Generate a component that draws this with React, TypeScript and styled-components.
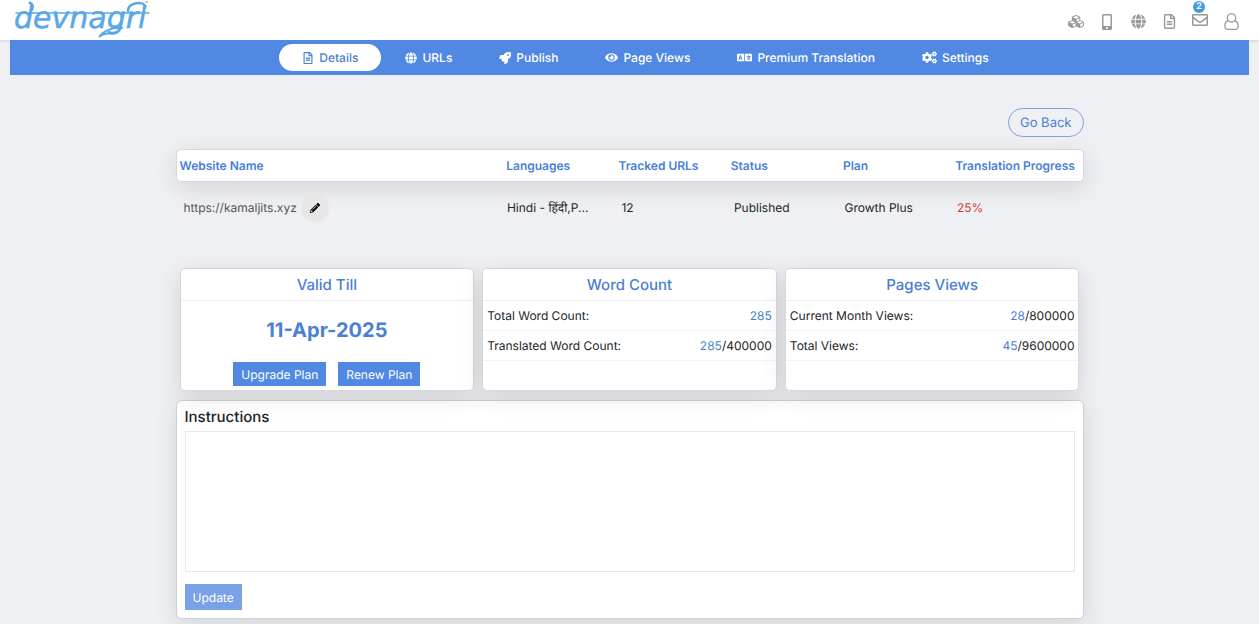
import React from "react";
import styled, { createGlobalStyle } from "styled-components";
import {
  FaCogs,
  FaEye,
  FaGlobe,
  FaLanguage,
  FaMobileAlt,
  FaPencilAlt,
  FaRegEnvelope,
  FaRegFileAlt,
  FaRocket,
} from "react-icons/fa";

const blue = "#5088e3";
const textBlue = "#4a7fd4";
const shadow = "0 6px 24px rgba(0, 0, 0, 0.12)";

const GlobalStyle = createGlobalStyle`
  * { box-sizing: border-box; }
  body {
    margin: 0;
    background: #eff0f4;
    color: #212529;
    font-family: Inter, "Noto Sans", sans-serif;
    font-size: 12px;
    line-height: 18px;
    text-rendering: geometricPrecision;
  }
  button, textarea { font-family: inherit; text-rendering: inherit; }
  h2, p { margin: 0; padding: 0; }
`;

const Header = styled.header`
  display: flex;
  justify-content: space-between;
  height: 40px;
  padding: 0 20px 0 12px;
  background: #fff;
  box-shadow: 0 1px 3px rgba(0, 0, 0, 0.12);
`;

const LogoLink = styled.a`
  display: block;
  height: 40px;
`;

const Tools = styled.div`
  display: flex;
  align-items: center;
  gap: 15px;
  padding-top: 3px;
`;

const ToolButton = styled.button`
  position: relative;
  display: flex;
  align-items: center;
  justify-content: center;
  width: 16px;
  height: 20px;
  padding: 0;
  border: 0;
  background: none;
  color: #999;
  font-size: 16px;
  svg { flex: none; }
`;

const MailButton = styled(ToolButton)`
  align-items: flex-start;
`;

const Badge = styled.span`
  position: absolute;
  top: -11px;
  left: 1px;
  width: 12px;
  height: 12px;
  border-radius: 6px;
  background: #459bdc;
  color: #fff;
  font-size: 9px;
  font-weight: 600;
  line-height: 12px;
  text-align: center;
`;

const Nav = styled.nav`
  display: flex;
  justify-content: center;
  align-items: center;
  gap: 1px;
  height: 35px;
  margin: 0 10px;
  padding-left: 32px;
  background: ${blue};
`;

const NavLink = styled.a<{ $active?: boolean }>`
  display: flex;
  align-items: center;
  gap: 5px;
  height: 27px;
  padding: 0 23px;
  border-radius: 14px;
  background: ${(p) => (p.$active ? "#fff" : "transparent")};
  color: ${(p) => (p.$active ? textBlue : "#fff")};
  font-weight: 500;
  text-decoration: none;
  white-space: nowrap;
`;

const Main = styled.main`
  max-width: 908px;
  margin: 0 auto;
  padding: 33px 0 6px;
`;

const TopBar = styled.div`
  display: flex;
  justify-content: flex-end;
  margin-bottom: 12px;
`;

const BackButton = styled.button`
  height: 29px;
  padding: 0 11px;
  border: 1px solid #7ba2dd;
  border-radius: 15px;
  background: transparent;
  color: ${textBlue};
  font-size: 13px;
`;

const SiteTable = styled.table`
  display: block;
  width: 100%;
  thead, tbody { display: block; }
`;

const columns = "326fr 112fr 112fr 112fr 112fr 130fr";

const HeadRow = styled.tr`
  display: grid;
  grid-template-columns: ${columns};
  align-items: center;
  height: 33px;
  border: 1px solid #d6d7da;
  border-radius: 5px;
  background: #fff;
  box-shadow: ${shadow};
`;

const HeadCell = styled.th`
  padding: 0 0 0 3px;
  color: ${textBlue};
  font-weight: 600;
  text-align: left;
  white-space: nowrap;
`;

const BodyRow = styled.tr`
  display: grid;
  grid-template-columns: ${columns};
  align-items: center;
  height: 44px;
  padding-top: 8px;
  border-bottom: 1px solid #ebecef;
`;

const Cell = styled.td<{ $color?: string; $indent: number }>`
  display: flex;
  align-items: center;
  gap: 4px;
  padding: 0 0 0 ${(p) => p.$indent}px;
  color: ${(p) => p.$color || "inherit"};
  white-space: nowrap;
`;

const EditButton = styled.button`
  display: flex;
  align-items: center;
  justify-content: center;
  width: 28px;
  height: 28px;
  padding: 0;
  border: 0;
  border-radius: 50%;
  background: #e7e7e8;
  color: #000;
  font-size: 10px;
`;

const Cards = styled.div`
  position: relative;
  display: grid;
  grid-template-columns: repeat(3, 1fr);
  gap: 8px;
  margin: 42px 4px 9px;
  z-index: 1;
`;

const Card = styled.section`
  min-height: 123px;
  border: 1px solid #d6d7da;
  border-radius: 5px;
  background: #fff;
  box-shadow: ${shadow};
`;

const CardTitle = styled.h2`
  height: 32px;
  border-bottom: 1px solid #f0f0f2;
  color: ${textBlue};
  font-size: 15px;
  font-weight: 500;
  line-height: 31px;
  text-align: center;
`;

const ValidDate = styled.p`
  padding: 14px 0 17px;
  color: ${textBlue};
  font-size: 20px;
  font-weight: 700;
  line-height: 30px;
  text-align: center;
`;

const Actions = styled.div`
  display: flex;
  justify-content: center;
  align-items: flex-start;
  gap: 12px;
`;

const SolidButton = styled.button`
  height: 24px;
  padding: 0 8px;
  border: 0;
  background: ${blue};
  color: #fff;
  font-size: 12px;
  &:disabled { height: 26px; background: #78a1e8; }
`;

const Stat = styled.div`
  display: flex;
  justify-content: space-between;
  height: 30px;
  padding: 0 4px;
  border-bottom: 1px solid #f3f3f5;
  line-height: 29px;
`;

const Figure = styled.span`
  color: ${textBlue};
`;

const Panel = styled.form`
  padding: 6px 8px 8px;
  border: 1px solid #d0d1d4;
  border-radius: 5px;
  background: #fff;
  box-shadow: ${shadow};
`;

const PanelLabel = styled.label`
  display: block;
  margin-bottom: 4px;
  font-size: 15px;
  font-weight: 500;
  line-height: 20px;
`;

const Notes = styled.textarea`
  display: block;
  width: 100%;
  height: 141px;
  margin-bottom: 12px;
  border: 1px solid #e8e8ea;
  background: #fff;
  resize: none;
`;

const Logo = () => (
  <svg width="140" height="40" viewBox="0 0 140 40" fill="none" stroke="#5ba8e8" strokeLinecap="round" aria-hidden="true">
    <text x="2" y="28" fill="#5ba8e8" stroke="#5ba8e8" strokeWidth="0.5" fontFamily="DejaVu Sans" fontStyle="italic" fontSize="30">
      devnagri
    </text>
    <path d="M4 13H137" strokeWidth="1.5" />
    <path d="M18 3C20 4 21 6 20 9" strokeWidth="3" />
    <path d="M116 11C116 2 132 1 133 6L131 14" strokeWidth="2.5" />
    <path d="M110 28C101 27 91 31 87 37C92 32 99 34 104 33" strokeWidth="2" />
    <text x="133" y="5" fill="#444" stroke="none" fontFamily="Inter" fontSize="5">
      ™
    </text>
  </svg>
);

const CubesIcon = () => (
  <svg width="17" height="13" viewBox="0 0 2304 1792" fill="currentColor" aria-hidden="true">
    <path d="M640 1632l384-192v-314l-384 164v342zm-64-454l404-173-404-173-404 173zm1088 454l384-192v-314l-384 164v342zm-64-454l404-173-404-173-404 173zm-448-293l384-165v-266l-384 164v267zm-64-379l441-189-441-189-441 189zm1088 518v416q0 36-19 67t-52 47l-448 224q-25 14-57 14t-57-14l-448-224q-4-2-7-4-2 2-7 4l-448 224q-25 14-57 14t-57-14l-448-224q-33-16-52-47t-19-67v-416q0-38 21.5-70t56.5-48l434-186v-400q0-38 21.5-70t56.5-48l448-192q23-10 50-10t50 10l448 192q35 16 56.5 48t21.5 70v400l434 186q36 16 57 48t21 70z" />
  </svg>
);

const UserIcon = () => (
  <svg width="15" height="17" viewBox="0 0 1536 1792" fill="currentColor" aria-hidden="true">
    <path d="M1201 784q47 14 89.5 38t89 73 79.5 115.5 55 172 22 236.5q0 154-100 263.5t-241 109.5h-854q-141 0-241-109.5t-100-263.5q0-131 22-236.5t55-172 79.5-115.5 89-73 89.5-38q-79-125-79-272 0-104 40.5-198.5t109.5-163.5 163.5-109.5 198.5-40.5 198.5 40.5 163.5 109.5 109.5 163.5 40.5 198.5q0 147-79 272zm-433-656q-159 0-271.5 112.5t-112.5 271.5 112.5 271.5 271.5 112.5 271.5-112.5 112.5-271.5-112.5-271.5-271.5-112.5zm427 1536q88 0 150.5-71.5t62.5-173.5q0-239-78.5-377t-225.5-145q-145 127-336 127t-336-127q-147 7-225.5 145t-78.5 377q0 102 62.5 173.5t150.5 71.5h854z" />
  </svg>
);

const tabs = [
  { label: "Details", icon: <FaRegFileAlt size={12} />, active: true },
  { label: "URLs", icon: <FaGlobe size={12} /> },
  { label: "Publish", icon: <FaRocket size={12} /> },
  { label: "Page Views", icon: <FaEye size={13} /> },
  { label: "Premium Translation", icon: <FaLanguage size={15} /> },
  { label: "Settings", icon: <FaCogs size={15} /> },
];

const headings = ["Website Name", "Languages", "Tracked URLs", "Status", "Plan", "Translation Progress"];

export default function App() {
  return (
    <>
      <GlobalStyle />
      <Header>
        <LogoLink href="#" aria-label="Devnagri home">
          <Logo />
        </LogoLink>
        <Tools>
          <ToolButton aria-label="Projects"><CubesIcon /></ToolButton>
          <ToolButton aria-label="Mobile"><FaMobileAlt /></ToolButton>
          <ToolButton aria-label="Websites"><FaGlobe size={15} /></ToolButton>
          <ToolButton aria-label="Documents"><FaRegFileAlt size={15} /></ToolButton>
          <MailButton aria-label="Messages">
            <FaRegEnvelope />
            <Badge>2</Badge>
          </MailButton>
          <ToolButton aria-label="Account"><UserIcon /></ToolButton>
        </Tools>
      </Header>
      <Nav>
        {tabs.map((t) => (
          <NavLink key={t.label} href="#" $active={t.active}>
            {t.icon}
            {t.label}
          </NavLink>
        ))}
      </Nav>
      <Main>
        <TopBar>
          <BackButton>Go Back</BackButton>
        </TopBar>
        <SiteTable>
          <thead>
            <HeadRow>
              {headings.map((h) => (
                <HeadCell key={h}>{h}</HeadCell>
              ))}
            </HeadRow>
          </thead>
          <tbody>
            <BodyRow>
              <Cell $indent={8} $color="#555">
                https://kamaljits.xyz
                <EditButton aria-label="Edit website name"><FaPencilAlt /></EditButton>
              </Cell>
              <Cell $indent={4}>Hindi - हिंदी,P...</Cell>
              <Cell $indent={6}>12</Cell>
              <Cell $indent={6}>Published</Cell>
              <Cell $indent={4}>Growth Plus</Cell>
              <Cell $indent={4} $color="#dc3a35">25%</Cell>
            </BodyRow>
          </tbody>
        </SiteTable>
        <Cards>
          <Card>
            <CardTitle>Valid Till</CardTitle>
            <ValidDate>11-Apr-2025</ValidDate>
            <Actions>
              <SolidButton>Upgrade Plan</SolidButton>
              <SolidButton>Renew Plan</SolidButton>
            </Actions>
          </Card>
          <Card>
            <CardTitle>Word Count</CardTitle>
            <Stat><span>Total Word Count:</span><span><Figure>285</Figure></span></Stat>
            <Stat><span>Translated Word Count:</span><span><Figure>285</Figure>/400000</span></Stat>
          </Card>
          <Card>
            <CardTitle>Pages Views</CardTitle>
            <Stat><span>Current Month Views:</span><span><Figure>28</Figure>/800000</span></Stat>
            <Stat><span>Total Views:</span><span><Figure>45</Figure>/9600000</span></Stat>
          </Card>
        </Cards>
        <Panel onSubmit={(e) => e.preventDefault()}>
          <PanelLabel htmlFor="instructions">Instructions</PanelLabel>
          <Notes id="instructions" />
          <SolidButton type="submit" disabled>Update</SolidButton>
        </Panel>
      </Main>
    </>
  );
}
